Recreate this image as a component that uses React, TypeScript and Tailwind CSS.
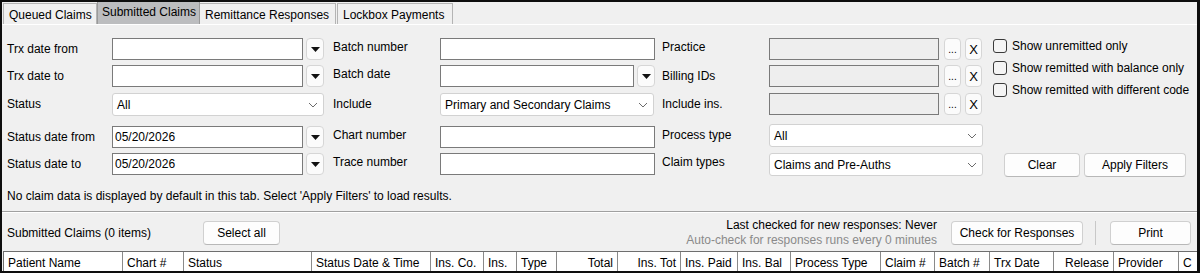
import React from "react";

const Tri = () => (
  <svg width="9" height="5" viewBox="0 0 9 5"><path d="M0 0 H9 L4.5 5 Z" fill="#111" /></svg>
);

const Chev = () => (
  <svg width="10" height="6" viewBox="0 0 10 6"><path d="M1 1 L5 5 L9 1" stroke="#6b6b6b" strokeWidth="1" fill="none" /></svg>
);

function DropBtn() {
  return (
    <div className="ml-[3px] w-[18px] h-[22px] bg-[#fbfbfb] border border-[#d6d6d6] rounded-[4px] flex items-center justify-center pt-[1px]">
      <Tri />
    </div>
  );
}

function TextBox({ w, value, disabled }: { w: string; value?: string; disabled?: boolean }) {
  return (
    <div className={`${w} h-[22px] border border-[#7a7a7a] ${disabled ? "bg-[#eeeeee]" : "bg-white"} flex items-center pl-[2px]`}>
      {value}
    </div>
  );
}

function Select({ w, value, extra = "" }: { w: string; value: string; extra?: string }) {
  return (
    <div className={`${w} ${extra} h-[23px] border border-[#d2d2d2] rounded-[3px] bg-white flex items-center justify-between pl-[4px] pr-[5px]`}>
      <span>{value}</span>
      <Chev />
    </div>
  );
}

function Label({ text, shift }: { text: string; shift?: boolean }) {
  return (
    <div className={`w-[107px] h-[22px] flex items-center shrink-0 ${shift ? "pb-[4px]" : ""}`}>{text}</div>
  );
}

function PickBtns() {
  return (
    <>
      <div className="ml-[5px] w-[17px] h-[22px] bg-[#fbfbfb] border border-[#d6d6d6] rounded-[4px] flex items-end justify-center pb-[4px] text-[10px] leading-none">...</div>
      <div className="ml-[4px] w-[17px] h-[22px] bg-[#fbfbfb] border border-[#d6d6d6] rounded-[4px] flex items-center justify-center text-[13px]">X</div>
    </>
  );
}

function Btn({ w, text, extra = "" }: { w: string; text: string; extra?: string }) {
  return (
    <div className={`${w} ${extra} h-[24px] bg-[#fdfdfd] border border-[#d0d0d0] border-b-[#b8b8b8] rounded-[4px] flex items-center justify-center`}>
      {text}
    </div>
  );
}

function Check({ text }: { text: string }) {
  return (
    <div className="h-[22px] flex items-center">
      <div className="w-[14px] h-[14px] border border-[#3a3a3a] rounded-[3px] bg-[#f4f4f4]" />
      <span className="ml-[5px]">{text}</span>
    </div>
  );
}

const cols: { t: string; w: string; r?: boolean }[] = [
  { t: "Patient Name", w: "w-[119px]" },
  { t: "Chart #", w: "w-[61px]" },
  { t: "Status", w: "w-[128px]" },
  { t: "Status Date & Time", w: "w-[119px]" },
  { t: "Ins. Co.", w: "w-[53px]" },
  { t: "Ins.", w: "w-[33px]" },
  { t: "Type", w: "w-[40px]" },
  { t: "Total", w: "w-[61px]", r: true },
  { t: "Ins. Tot", w: "w-[63px]", r: true },
  { t: "Ins. Paid", w: "w-[57px]" },
  { t: "Ins. Bal", w: "w-[53px]" },
  { t: "Process Type", w: "w-[90px]" },
  { t: "Claim #", w: "w-[54px]" },
  { t: "Batch #", w: "w-[55px]" },
  { t: "Trx Date", w: "w-[64px]" },
  { t: "Release", w: "w-[60px]", r: true },
  { t: "Provider", w: "w-[65px]" },
  { t: "C", w: "w-[40px]" },
];

export default function App() {
  return (
    <div className="w-[1200px] h-[273px] bg-[#f0f0f0] border-2 border-r-[3px] border-[#0e0e0e] overflow-hidden font-['Liberation_Sans',Arial,sans-serif] text-[12px] leading-none text-black">
      {/* Tabs */}
      <div className="h-[23px] flex items-end pl-[1px] border-b border-white">
        <div className="w-[94px] h-[21px] border border-[#b4b4b4] border-b-0 bg-[#f0f0f0] flex items-center pl-[5px] pt-[1px]">Queued Claims</div>
        <div className="w-[103px] h-[23px] border border-[#9a9a9a] border-b-0 bg-[#bcbdbf] flex items-center pl-[4px] pb-[2px]">Submitted Claims</div>
        <div className="w-[136px] h-[21px] border border-[#b4b4b4] border-b-0 border-l-0 bg-[#f0f0f0] flex items-center pl-[5px] pt-[1px]">Remittance Responses</div>
        <div className="ml-[1px] w-[116px] h-[21px] border border-[#b4b4b4] border-b-0 bg-[#f0f0f0] flex items-center pl-[5px] pt-[1px]">Lockbox Payments</div>
      </div>

      {/* Filter form */}
      <div className="flex pl-[5px] pt-[13px]">
        <div className="flex flex-col">
          {/* Row 1 */}
          <div className="h-[27px] flex items-start">
            <div className="w-[317px] flex">
              <div className="w-[105px] h-[22px] flex items-center">Trx date from</div>
              <TextBox w="w-[191px]" />
              <DropBtn />
            </div>
            <div className="ml-[9px] w-[322px] flex">
              <Label text="Batch number" shift />
              <TextBox w="w-[215px]" />
            </div>
            <div className="ml-[7px] w-[321px] flex">
              <Label text="Practice" shift />
              <TextBox w="w-[170px]" disabled />
              <PickBtns />
            </div>
          </div>
          {/* Row 2 */}
          <div className="h-[28px] flex items-start">
            <div className="w-[317px] flex">
              <div className="w-[105px] h-[22px] flex items-center">Trx date to</div>
              <TextBox w="w-[191px]" />
              <DropBtn />
            </div>
            <div className="ml-[9px] w-[322px] flex">
              <Label text="Batch date" shift />
              <TextBox w="w-[194px]" />
              <DropBtn />
            </div>
            <div className="ml-[7px] w-[321px] flex">
              <Label text="Billing IDs" />
              <TextBox w="w-[170px]" disabled />
              <PickBtns />
            </div>
          </div>
          {/* Row 3 */}
          <div className="h-[33px] flex items-start">
            <div className="w-[317px] flex">
              <div className="w-[105px] h-[22px] flex items-center">Status</div>
              <Select w="w-[212px]" value="All" />
            </div>
            <div className="ml-[9px] w-[322px] flex">
              <Label text="Include" />
              <Select w="w-[214px]" value="Primary and Secondary Claims" />
            </div>
            <div className="ml-[7px] w-[321px] flex">
              <Label text="Include ins." />
              <TextBox w="w-[170px]" disabled />
              <PickBtns />
            </div>
          </div>
          {/* Row 4 */}
          <div className="h-[27px] flex items-start">
            <div className="w-[317px] flex">
              <div className="w-[105px] h-[22px] flex items-center">Status date from</div>
              <TextBox w="w-[191px]" value="05/20/2026" />
              <DropBtn />
            </div>
            <div className="ml-[9px] w-[322px] flex">
              <Label text="Chart number" shift />
              <TextBox w="w-[215px]" />
            </div>
            <div className="ml-[7px] w-[321px] flex">
              <Label text="Process type" shift />
              <Select w="w-[215px]" value="All" extra="-mt-[2px]" />
            </div>
          </div>
          {/* Row 5 */}
          <div className="h-[22px] flex items-start">
            <div className="w-[317px] flex">
              <div className="w-[105px] h-[22px] flex items-center">Status date to</div>
              <TextBox w="w-[191px]" value="05/20/2026" />
              <DropBtn />
            </div>
            <div className="ml-[9px] w-[322px] flex">
              <Label text="Trace number" shift />
              <TextBox w="w-[215px]" />
            </div>
            <div className="ml-[7px] w-[321px] flex">
              <Label text="Claim types" shift />
              <Select w="w-[215px]" value="Claims and Pre-Auths" />
            </div>
          </div>
        </div>

        {/* Right side */}
        <div className="ml-[10px] flex flex-col justify-between -mt-[3px]">
          <div className="flex flex-col">
            <Check text="Show unremitted only" />
            <Check text="Show remitted with balance only" />
            <Check text="Show remitted with different code" />
          </div>
          <div className="flex ml-[11px] mb-[-2px]">
            <Btn w="w-[76px]" text="Clear" />
            <Btn w="w-[102px]" text="Apply Filters" extra="ml-[4px]" />
          </div>
        </div>
      </div>

      {/* Message */}
      <div className="h-[36px] flex items-center pl-[5px] pt-[6px]">
        No claim data is displayed by default in this tab. Select 'Apply Filters' to load results.
      </div>
      <div className="h-[1px] bg-[#a0a0a0]" />
      <div className="h-[1px] bg-white" />

      {/* Toolbar */}
      <div className="h-[38px] flex items-center pl-[5px] pr-[6px] pt-[1px]">
        <div className="w-[196px]">Submitted Claims (0 items)</div>
        <Btn w="w-[77px]" text="Select all" />
        <div className="flex-1" />
        <div className="flex flex-col items-end leading-[15px]">
          <span>Last checked for new responses: Never</span>
          <span className="text-[#8a8a8a]">Auto-check for responses runs every 0 minutes</span>
        </div>
        <Btn w="w-[132px]" text="Check for Responses" extra="ml-[14px]" />
        <div className="ml-[12px] w-[1px] h-[24px] bg-[#c8c8c8]" />
        <Btn w="w-[81px]" text="Print" extra="ml-[14px]" />
      </div>

      {/* Table header */}
      <div className="flex ml-[1px] border-t border-l border-[#6e6e6e] bg-white">
        {cols.map((c) => (
          <div
            key={c.t}
            className={`${c.w} shrink-0 h-[22px] border-r border-[#8a8a8a] flex items-center px-[4px] whitespace-nowrap overflow-hidden ${c.r ? "justify-end" : ""}`}
          >
            {c.t}
          </div>
        ))}
      </div>
    </div>
  );
}
